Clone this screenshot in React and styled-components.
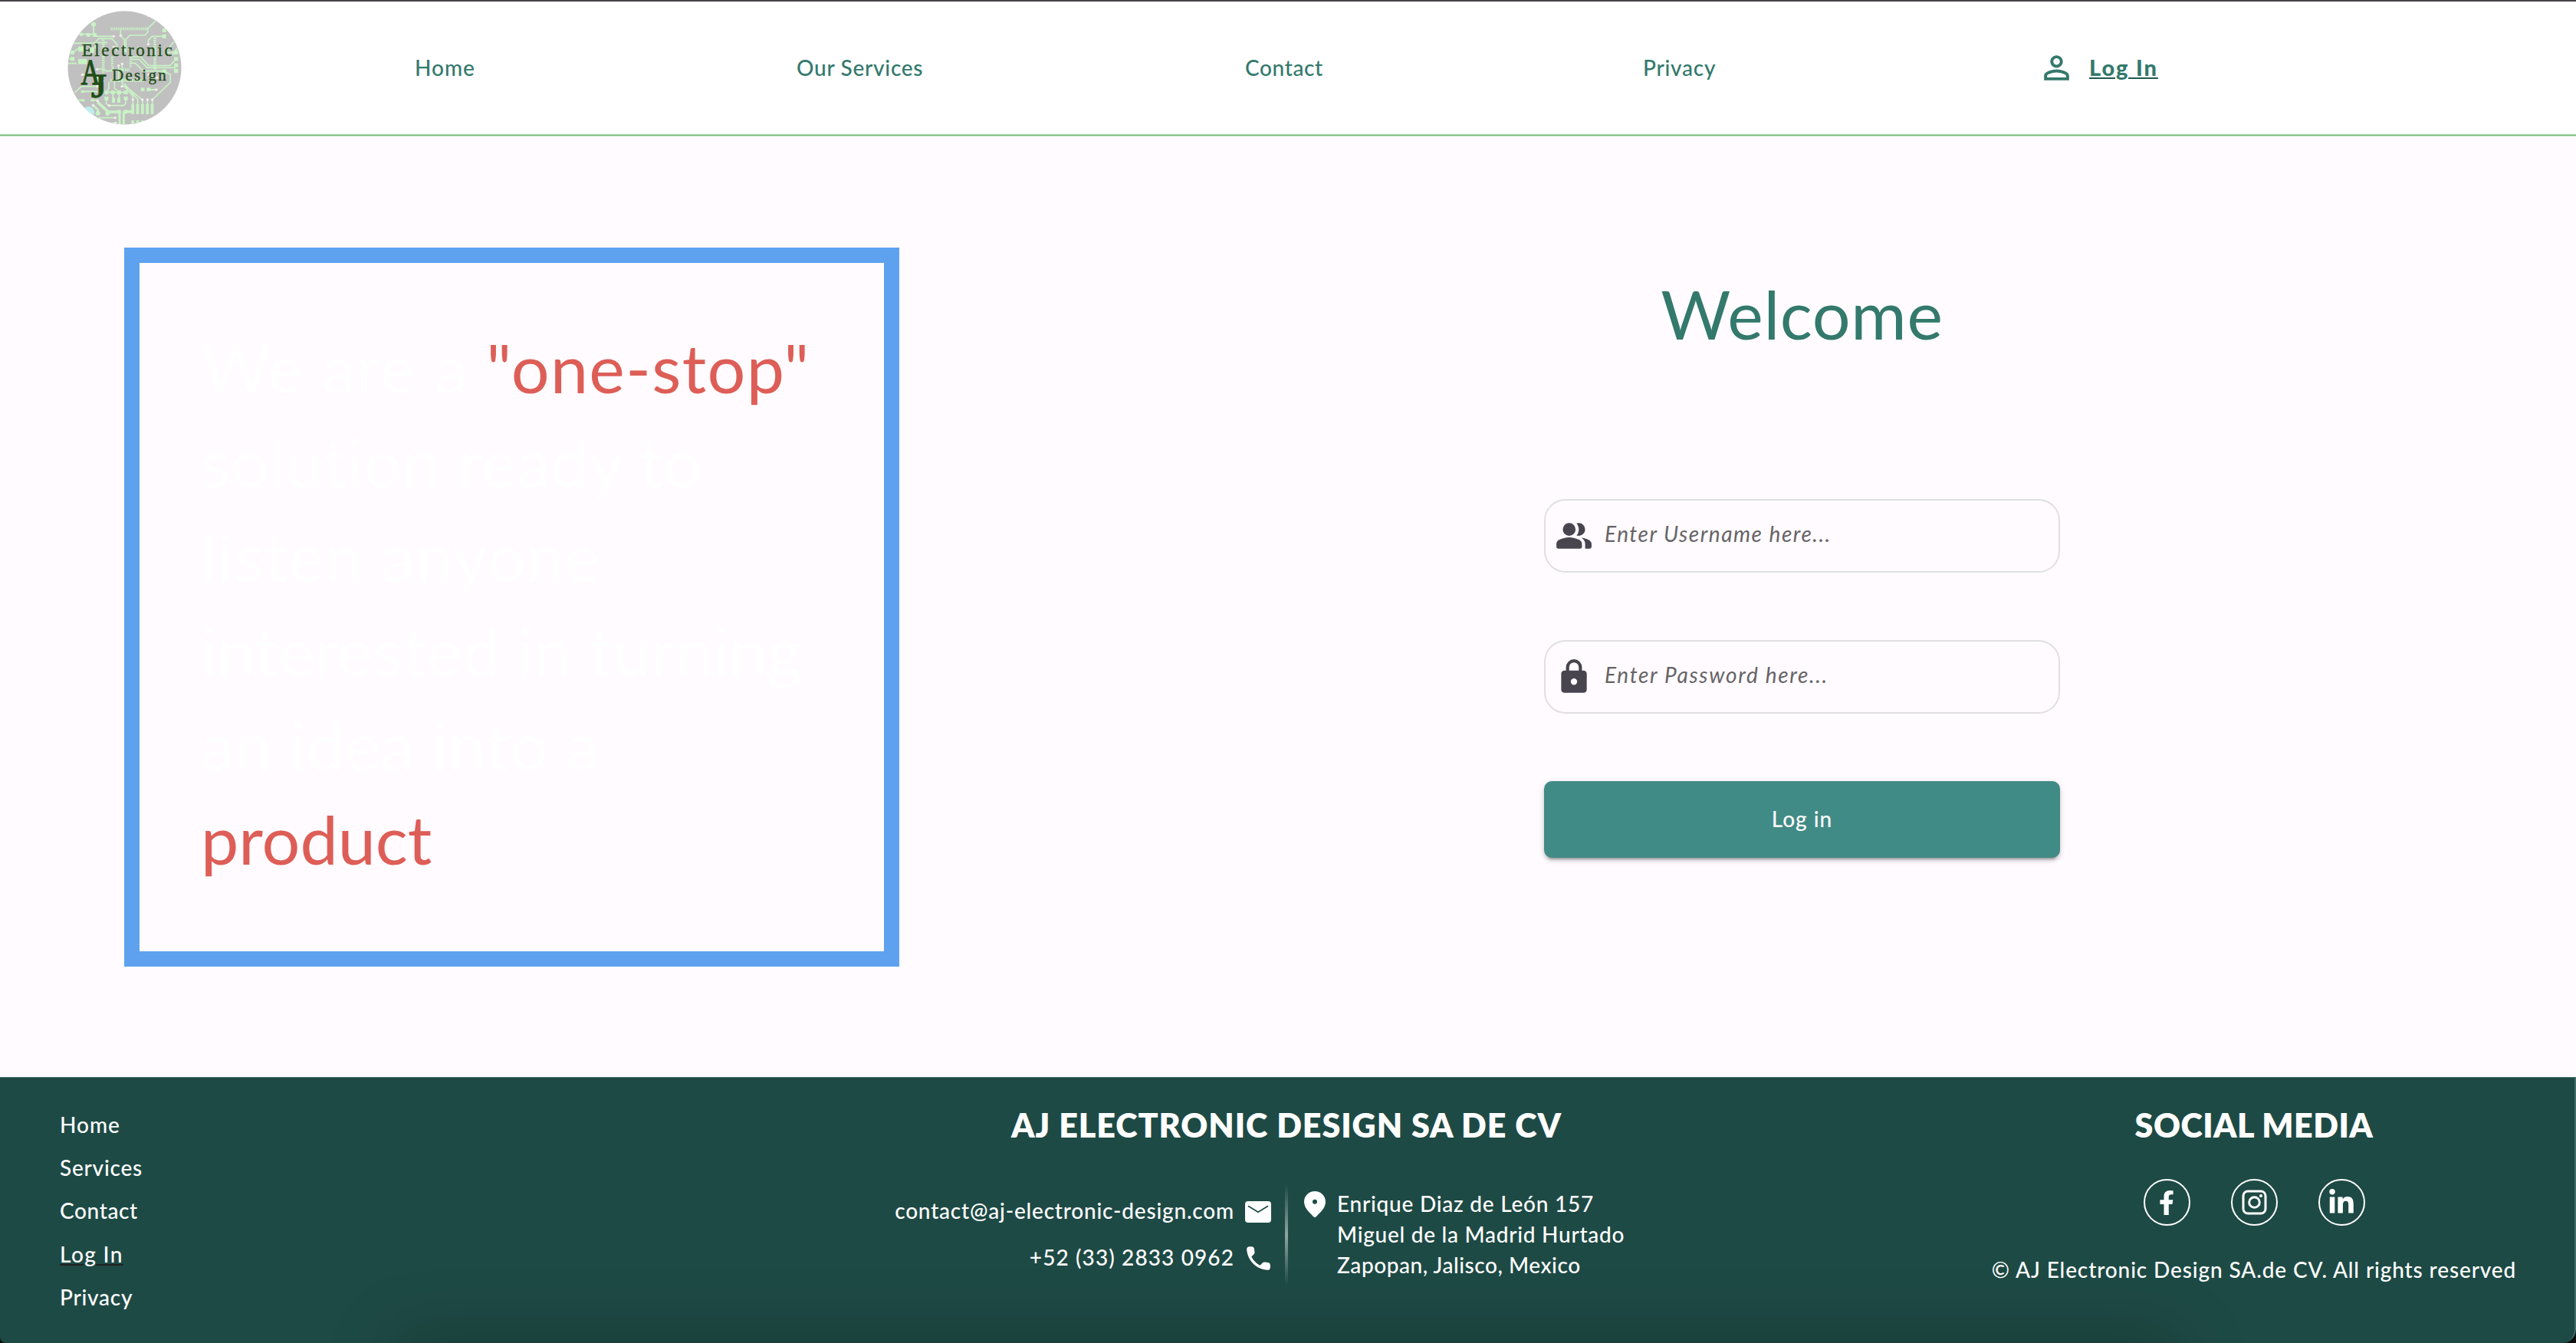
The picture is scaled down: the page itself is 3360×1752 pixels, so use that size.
import React from "react";
import styled, { createGlobalStyle } from "styled-components";
import { FaFacebookF, FaLinkedinIn } from "react-icons/fa";

const c = {
  page: "#fffbff",
  teal: "#33796c",
  dark: "#1e4a45",
  red: "#dd5e57",
  blue: "#5ea2ef",
  icon: "#49454f",
};

const GlobalStyle = createGlobalStyle`
  * { box-sizing: border-box; }
  body {
    margin: 0;
    background: #0d0f0f;
    font-family: Lato, "Open Sans", sans-serif;
    font-size: 28px;
    font-weight: 500;
    font-variant-ligatures: none;
  }
`;

const Page = styled.div`
  display: flex;
  flex-direction: column;
  height: 1752px;
  overflow: hidden;
`;

/* ---------- header ---------- */

const Header = styled.header`
  display: grid;
  grid-template-columns: 453px 498px 585px 519px 515px 67px auto;
  align-items: center;
  height: 178px;
  padding: 0 0 3px 88px;
  background: #ffffff;
  border-top: 2px solid #464446;
  box-shadow: inset 0 -1px #bfe2bd, inset 0 -2px #72bb72, inset 0 -3px #b0dbae;
`;

const NavLink = styled.a`
  color: ${c.teal};
  letter-spacing: ${(p) => p.$ls}px;
  padding-bottom: 2px;
  white-space: nowrap;
`;

const LoginLink = styled(NavLink)`
  font-size: 29px;
  font-weight: 900;
  text-decoration: underline #1f5a50 2px;
  text-underline-offset: 2px;
`;

const LogoSvg = styled.svg`
  display: block;
  width: 149px;
  height: 149px;
`;

const PersonSvg = styled.svg`
  display: block;
  width: 49px;
  height: 49px;
  fill: ${c.teal};
`;

function Logo() {
  return (
    <LogoSvg viewBox="54 42 447 447" role="img" aria-label="AJ Electronic Design">
      <defs>
        <clipPath id="disc">
          <circle cx="277.5" cy="265.5" r="222" />
        </clipPath>
      </defs>
      <circle cx="277.5" cy="265.5" r="222" fill="#c0c0c0" />
      <g clipPath="url(#disc)">
        <circle cx="136" cy="440" r="23" fill="#bdeeee" />
        <g fill="none" stroke="#c8f3c4" strokeWidth="5">
          <path d="M223 113H368" strokeWidth="11" strokeDasharray="4 3" />
          <path d="M400 80 368 112V126L357 138H298L283 154V205M262 118V140L277 156V205" />
          <path d="M156 95V135M105 134H160L168 142H235" />
          <path d="M75 169H160L176 151H228L247 172V200M160 185 174 167H210" />
          <path d="M432 142H385L370 158V174M475 158 436 205M500 165 462 218" />
          <path d="M55 248H90M55 205H74L95 190M74 230H55" />
          <path d="M305 222H340L372 257H455L478 232M305 232H334L366 265H478M300 247H320L350 278H433M478 205H440" />
          <path d="M433 280 457 292V322L386 390M330 182V205" />
          <path d="M268 250V327L310 376V410M254 256V320M277 327 329 390V410M268 338H282L348 392V410M367 392V410M386 392V410" />
          <path d="M168 270H190L206 278H225L235 262M112 292H140" />
          <path d="M206 361H282M216 320V345L206 361M238 320V345L256 361M206 386V406L216 413H275L282 404V386M232 361V392M256 361V392" />
          <path d="M82 362 110 338H172V292M115 358H172M60 392H118M150 392H172" />
          <path d="M177 461H241M230 481H242" />
          <path d="M172 400 214 438H250M280 437H306" strokeWidth="11" />
          <path d="M154 412 173 430V442" strokeWidth="8" />
          <path d="M194 155V285M396 148V272" strokeWidth="11" strokeDasharray="5 3" />
          <path d="M229 222V264M301 222V264" strokeWidth="9" strokeDasharray="5 3" />
          <path d="M258 273H296M222 315H355" strokeWidth="12" strokeDasharray="4 3" />
          <path d="M258 436V487M274 436V487" strokeWidth="9" />
        </g>
        <g fill="#c8f3c4">
          <circle cx="156" cy="95" r="9" />
          <circle cx="173" cy="443" r="9" />
          <circle cx="211" cy="443" r="9" />
          <rect x="101" y="128" width="13" height="13" />
          <rect x="128" y="130" width="15" height="14" />
          <rect x="153" y="130" width="15" height="14" />
          <rect x="425" y="112" width="15" height="14" />
          <rect x="425" y="135" width="15" height="15" />
          <rect x="66" y="198" width="15" height="15" />
          <rect x="66" y="223" width="15" height="15" />
          <rect x="96" y="182" width="22" height="20" />
          <rect x="96" y="231" width="34" height="20" />
          <rect x="142" y="184" width="16" height="24" />
          <rect x="471" y="198" width="16" height="15" />
          <rect x="471" y="223" width="16" height="15" />
          <rect x="471" y="248" width="16" height="15" />
          <rect x="471" y="270" width="16" height="15" />
          <rect x="425" y="272" width="16" height="15" />
          <rect x="199" y="354" width="15" height="15" />
          <rect x="224" y="354" width="15" height="15" />
          <rect x="249" y="354" width="15" height="15" />
          <rect x="275" y="354" width="15" height="15" />
          <rect x="199" y="378" width="15" height="15" />
          <rect x="275" y="378" width="15" height="15" />
          <rect x="228" y="383" width="12" height="19" />
          <rect x="249" y="383" width="12" height="19" />
          <rect x="341" y="343" width="14" height="14" />
          <rect x="364" y="343" width="14" height="14" />
          <rect x="372" y="348" width="30" height="6" />
          <rect x="107" y="354" width="14" height="9" />
          <rect x="107" y="388" width="14" height="9" />
          <rect x="145" y="388" width="14" height="9" />
          <rect x="304" y="407" width="11" height="40" />
          <rect x="323" y="407" width="11" height="40" />
          <rect x="342" y="407" width="11" height="40" />
          <rect x="361" y="407" width="11" height="40" />
          <rect x="380" y="407" width="11" height="40" />
          <rect x="249" y="430" width="14" height="14" />
          <rect x="274" y="430" width="14" height="14" />
          <rect x="304" y="471" width="11" height="18" />
          <rect x="323" y="471" width="11" height="18" />
          <rect x="342" y="471" width="11" height="18" />
          <rect x="361" y="471" width="11" height="18" />
        </g>
        <g fill="#f4eeec">
          {[
            [235, 142], [262, 139], [370, 173], [235, 184], [168, 187], [254, 257],
            [268, 250], [170, 271], [112, 292], [193, 317], [267, 338], [172, 338],
            [402, 351], [310, 390], [347, 390], [367, 390], [386, 390], [172, 395],
            [154, 412], [217, 413], [241, 461], [242, 481], [404, 304], [371, 62], [371, 292],
          ].map(([x, y]) => (
            <circle key={`${x}-${y}`} cx={x} cy={y} r="5" />
          ))}
        </g>
      </g>
      <text fill="#1f4d18" stroke="#1f4d18" fontFamily='"Liberation Serif", serif'>
        <tspan x="110" y="220" fontSize="69" strokeWidth="1" textLength="354" lengthAdjust="spacing">
          Electronic
        </tspan>
        <tspan x="107" y="330" fontSize="140" strokeWidth="4" textLength="74" lengthAdjust="spacingAndGlyphs">
          A
        </tspan>
        <tspan x="147" y="380" fontSize="134" strokeWidth="4" textLength="60" lengthAdjust="spacingAndGlyphs">
          J
        </tspan>
        <tspan x="228" y="316" fontSize="63" strokeWidth="1" textLength="212" lengthAdjust="spacing">
          Design
        </tspan>
      </text>
    </LogoSvg>
  );
}

/* ---------- main ---------- */

const Main = styled.main`
  display: grid;
  grid-template-columns: 1011px 673px;
  column-gap: 841px;
  align-items: start;
  height: 1227px;
  padding-left: 162px;
  background: ${c.page};
`;

const Pitch = styled.section`
  height: 938px;
  margin-top: 144.5px;
  padding: 75px 80px 0 80px;
  border: 20px solid ${c.blue};
  color: #ffffff;
  font-size: 88px;
  font-weight: 400;
  line-height: 123px;
`;

const PitchLine = styled.div`
  letter-spacing: ${(p) => p.$ls || 0}px;
  white-space: nowrap;
`;

const Accent = styled.span`
  color: ${c.red};
  letter-spacing: ${(p) => p.$ls || 0}px;
`;

const Form = styled.form`
  display: flex;
  flex-direction: column;
  gap: 88px;
  padding-top: 171px;
`;

const Welcome = styled.h1`
  margin: 0 0 94px;
  color: ${c.teal};
  font-size: 88px;
  font-weight: 400;
  line-height: 120px;
  letter-spacing: 0.7px;
  text-align: center;
`;

const Field = styled.label`
  display: flex;
  align-items: center;
  gap: 15px;
  height: 96px;
  padding: 0 12px;
  border: 2px solid #e0e0e0;
  border-radius: 28px;
`;

const FieldSvg = styled.svg`
  flex: none;
  width: 50px;
  height: 50px;
  fill: ${c.icon};
`;

const FieldInput = styled.input`
  flex: 1;
  min-width: 0;
  padding: 0 0 6px;
  border: 0;
  outline: 0;
  background: transparent;
  font: italic 400 28px Lato, sans-serif;
  letter-spacing: ${(p) => p.$ls}px;
  &::placeholder {
    color: #666366;
    opacity: 1;
  }
`;

const Submit = styled.button`
  height: 100px;
  padding: 0 0 2px;
  border: 0;
  border-radius: 10px;
  background: #418b86;
  box-shadow: 0 6px 2px -4px rgba(0, 0, 0, 0.2), 0 4px 4px rgba(0, 0, 0, 0.14),
    0 2px 10px rgba(0, 0, 0, 0.12);
  color: #ffffff;
  font: 500 28px Lato, sans-serif;
  letter-spacing: 1px;
`;

/* ---------- footer ---------- */

const Footer = styled.footer`
  position: relative;
  display: grid;
  grid-template-columns: 1089px 1430px 686px;
  height: 347px;
  padding-left: 78px;
  overflow: hidden;
  border-top: 1px solid #47706a;
  border-right: 2px solid #416d67;
  border-radius: 0 0 18px 8px;
  background: ${c.dark};
  color: #ffffff;
  &::after {
    content: "";
    position: absolute;
    top: 100%;
    left: 520px;
    right: 520px;
    height: 60px;
    box-shadow: 0 0 90px 6px rgba(0, 0, 0, 0.22);
  }
`;

const FooterLinks = styled.nav`
  display: flex;
  flex-direction: column;
  align-items: flex-start;
  padding-top: 33px;
  line-height: 56.2px;
`;

const FooterLink = styled.a`
  letter-spacing: ${(p) => p.$ls}px;
  text-decoration: ${(p) => (p.$current ? "underline #222222 2px" : "none")};
  text-underline-offset: 2px;
`;

const FooterColumn = styled.div`
  display: flex;
  flex-direction: column;
  align-items: center;
  width: ${(p) => p.$width}px;
  padding-top: 32px;
`;

const FooterTitle = styled.h2`
  margin: 0;
  font-size: 43px;
  font-weight: 800;
  line-height: 60px;
  letter-spacing: ${(p) => p.$ls}px;
  white-space: nowrap;
`;

const ContactGrid = styled.div`
  display: grid;
  grid-template-columns: 1fr 4px 1fr;
  width: 100%;
  margin-top: 47px;
`;

const ContactLines = styled.div`
  padding: 4px 18px 0 0;
`;

const ContactLine = styled.div`
  display: grid;
  grid-template-columns: 1fr 34px;
  column-gap: 14px;
  align-items: center;
  justify-items: center;
  height: 60.5px;
  letter-spacing: ${(p) => p.$ls}px;
  white-space: nowrap;
`;

const ContactText = styled.span`
  justify-self: end;
`;

const MailSvg = styled.svg`
  display: block;
  width: 34px;
  height: 28px;
  margin-top: 4px;
`;

const PhoneSvg = styled.svg`
  display: block;
  width: 41px;
  height: 41px;
  margin-top: 3px;
  fill: #ffffff;
`;

const Divider = styled.div`
  height: 132px;
  background: linear-gradient(to bottom, transparent, rgba(255, 255, 255, 0.5), transparent);
`;

const AddressBlock = styled.div`
  display: flex;
  align-items: flex-start;
  gap: 15px;
  padding: 5px 0 0 21px;
`;

const PinSvg = styled.svg`
  display: block;
  width: 28px;
  height: 34px;
  margin-top: 4px;
  fill: #ffffff;
`;

const AddressLine = styled.div`
  line-height: 40px;
  letter-spacing: ${(p) => p.$ls}px;
  white-space: nowrap;
`;

const SocialRow = styled.div`
  display: flex;
  gap: 53px;
  margin-top: 40px;
`;

const SocialButton = styled.a`
  display: flex;
  align-items: center;
  justify-content: center;
  width: 61px;
  height: 61px;
  border: 2px solid #ffffff;
  border-radius: 50%;
  color: #ffffff;
  font-size: ${(p) => p.$size}px;
`;

const Copyright = styled.p`
  margin: 37px 0 0;
  line-height: 40px;
  letter-spacing: 0.88px;
  white-space: nowrap;
`;

export default function App() {
  return (
    <Page>
      <GlobalStyle />
      <Header>
        <Logo />
        <NavLink $ls={1.0}>Home</NavLink>
        <NavLink $ls={0.74}>Our Services</NavLink>
        <NavLink $ls={0.62}>Contact</NavLink>
        <NavLink $ls={0.77}>Privacy</NavLink>
        <PersonSvg viewBox="0 0 24 24">
          <path d="M12 5.9c1.16 0 2.1.94 2.1 2.1s-.94 2.1-2.1 2.1S9.900 9.160 9.900 8s.94-2.1 2.1-2.1m0 9c2.970 0 6.100 1.460 6.100 2.100v1.100H5.900V17c0-.640 3.130-2.100 6.100-2.100M12 4C9.790 4 8 5.790 8 8s1.790 4 4 4 4-1.790 4-4-1.790-4-4-4zm0 9c-2.670 0-8 1.340-8 4v3h16v-3c0-2.660-5.330-4-8-4z" />
        </PersonSvg>
        <LoginLink $ls={1.9}>Log In</LoginLink>
      </Header>

      <Main>
        <Pitch>
          <PitchLine $ls={0.9}>
            We are a <Accent $ls={1.36}>"one-stop"</Accent>
          </PitchLine>
          <PitchLine $ls={0.3}>solution ready to</PitchLine>
          <PitchLine $ls={0.8}>listen anyone</PitchLine>
          <PitchLine $ls={0.1}>interested in turning</PitchLine>
          <PitchLine $ls={0.3}>an idea into a</PitchLine>
          <PitchLine>
            <Accent>product</Accent>
          </PitchLine>
        </Pitch>

        <Form>
          <Welcome>Welcome</Welcome>
          <Field>
            <FieldSvg viewBox="0 -960 960 960">
              <path d="M40-200v-72q0-34 17.500-62.500T104-378q62-31 126-46.500T360-440q66 0 130 15.500T616-378q29 15 46.500 43.500T680-272v72q0 40-40 40H80q-40 0-40-40Zm720 40v-120q0-44-24.500-84.500T666-434q51 6 96 20.500t84 35.500q36 20 55 44.500t19 53.500v80q0 40-40 40H760ZM360-480q-66 0-113-47t-47-113q0-66 47-113t113-47q66 0 113 47t47 113q0 66-47 113t-113 47Zm400-160q0 66-47 113t-113 47q-11 0-28-2.500t-28-5.500q27-32 41.500-71t14.500-81q0-42-14.500-81T544-792q14-5 28-6.500t28-1.500q66 0 113 47t47 113Z" />
            </FieldSvg>
            <FieldInput placeholder="Enter Username here..." $ls={1.52} />
          </Field>
          <Field>
            <FieldSvg viewBox="0 -960 960 960">
              <path d="M240-80q-33 0-56.500-23.500T160-160v-400q0-33 23.500-56.500T240-640h40v-80q0-83 58.500-141.500T480-920q83 0 141.500 58.500T680-720v80h40q33 0 56.500 23.500T800-560v400q0 33-23.500 56.500T720-80H240Zm240-200q33 0 56.500-23.500T560-360q0-33-23.500-56.500T480-440q-33 0-56.500 23.500T400-360q0 33 23.500 56.500T480-280ZM360-640h240v-80q0-50-35-85t-85-35q-50 0-85 35t-35 85v80Z" />
            </FieldSvg>
            <FieldInput type="password" placeholder="Enter Password here..." $ls={1.69} />
          </Field>
          <Submit type="button">Log in</Submit>
        </Form>
      </Main>

      <Footer>
        <FooterLinks>
          <FooterLink $ls={1.0}>Home</FooterLink>
          <FooterLink $ls={0.78}>Services</FooterLink>
          <FooterLink $ls={0.62}>Contact</FooterLink>
          <FooterLink $ls={1.4} $current>
            Log In
          </FooterLink>
          <FooterLink $ls={0.77}>Privacy</FooterLink>
        </FooterLinks>

        <FooterColumn $width={1022}>
          <FooterTitle $ls={0.98}>AJ ELECTRONIC DESIGN SA DE CV</FooterTitle>
          <ContactGrid>
            <ContactLines>
              <ContactLine $ls={0.8}>
                <ContactText>contact@aj-electronic-design.com</ContactText>
                <MailSvg viewBox="0 0 34 28">
                  <rect width="34" height="28" rx="4" fill="#ffffff" />
                  <path d="M4 6.200 17 14.200 30 6.200" fill="none" stroke={c.dark} strokeWidth="1.8" />
                </MailSvg>
              </ContactLine>
              <ContactLine $ls={1.1}>
                <ContactText>+52 (33) 2833 0962</ContactText>
                <PhoneSvg viewBox="0 0 24 24">
                  <path d="M19.230 15.260l-2.540-.290c-.610-.070-1.210.140-1.640.570l-1.840 1.840c-2.830-1.440-5.150-3.750-6.590-6.590l1.850-1.850c.430-.430.640-1.030.570-1.640l-.290-2.520c-.120-1.010-.970-1.770-1.990-1.770H5.030c-1.130 0-2.070.940-2 2.070.530 8.540 7.360 15.360 15.890 15.890 1.130.070 2.070-.870 2.070-2v-1.730c.010-1.010-.750-1.860-1.760-1.980z" />
                </PhoneSvg>
              </ContactLine>
            </ContactLines>
            <Divider />
            <AddressBlock>
              <PinSvg viewBox="0 0 28 34">
                <path
                  fillRule="evenodd"
                  d="M14 0C6.300 0 0 6 0 13.800 0 22.500 7.500 28 12 33c1.200 1.200 2.800 1.200 4 0 4.500-5 12-10.500 12-19.200C28 6 21.700 0 14 0zm0 10.800a3 3 0 1 1 0 6 3 3 0 0 1 0-6z"
                />
              </PinSvg>
              <div>
                <AddressLine $ls={0.76}>Enrique Diaz de León 157</AddressLine>
                <AddressLine $ls={0.74}>Miguel de la Madrid Hurtado</AddressLine>
                <AddressLine $ls={0.55}>Zapopan, Jalisco, Mexico</AddressLine>
              </div>
            </AddressBlock>
          </ContactGrid>
        </FooterColumn>

        <FooterColumn $width={686}>
          <FooterTitle $ls={0.5}>SOCIAL MEDIA</FooterTitle>
          <SocialRow>
            <SocialButton $size={32} aria-label="Facebook">
              <FaFacebookF />
            </SocialButton>
            <SocialButton $size={32} aria-label="Instagram">
              <svg width="33" height="33" viewBox="0 0 33 33" fill="none" stroke="currentColor" strokeWidth="3">
                <rect x="2" y="2" width="29" height="29" rx="6" />
                <circle cx="16.500" cy="16.500" r="6.800" />
                <circle cx="25" cy="8" r="2.100" fill="currentColor" stroke="none" />
              </svg>
            </SocialButton>
            <SocialButton $size={36} aria-label="LinkedIn">
              <FaLinkedinIn />
            </SocialButton>
          </SocialRow>
          <Copyright>© AJ Electronic Design SA.de CV. All rights reserved</Copyright>
        </FooterColumn>
      </Footer>
    </Page>
  );
}
